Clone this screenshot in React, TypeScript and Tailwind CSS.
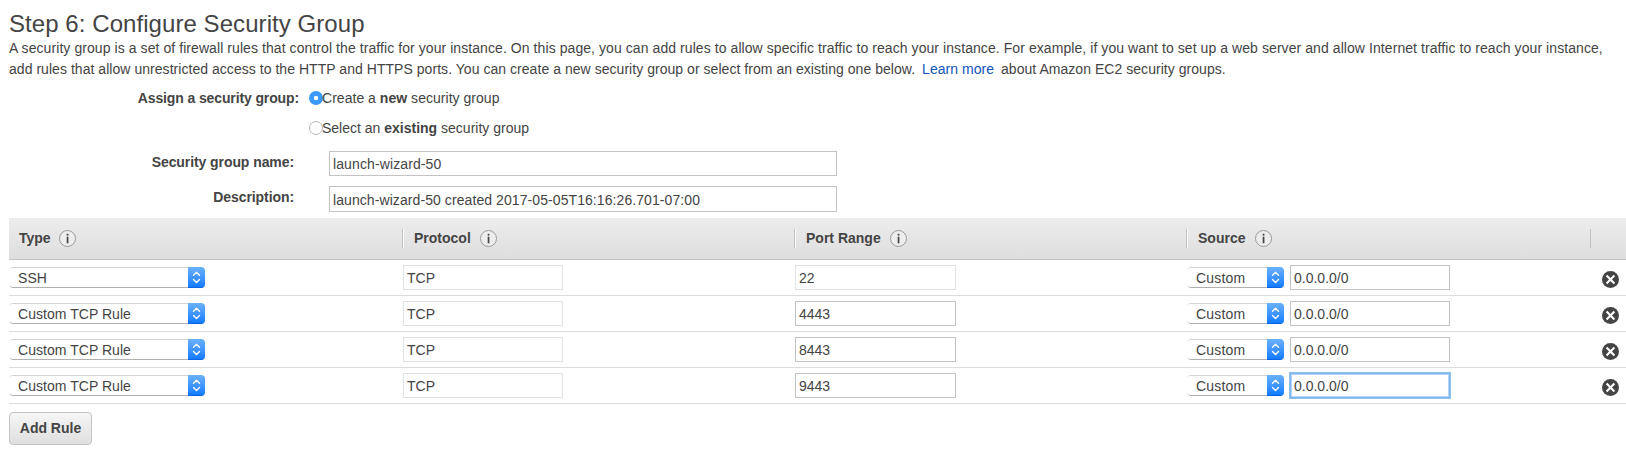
import React from "react";

type Rule = { type: string; port: string; portLocked?: boolean; focused?: boolean };

const rules: Rule[] = [
  { type: "SSH", port: "22", portLocked: true },
  { type: "Custom TCP Rule", port: "4443" },
  { type: "Custom TCP Rule", port: "8443" },
  { type: "Custom TCP Rule", port: "9443", focused: true },
];

const columns = "grid grid-cols-[393px_392px_392px_404px_1fr]";

function InfoIcon() {
  return (
    <svg width="17" height="17" viewBox="0 0 17 17" className="shrink-0">
      <circle cx="8.5" cy="8.5" r="8" fill="#ededed" stroke="#999" strokeWidth="1" />
      <rect x="7.7" y="3.8" width="1.7" height="1.8" fill="#444" />
      <rect x="7.7" y="6.7" width="1.7" height="6.6" fill="#444" />
    </svg>
  );
}

function HeaderCell({ label, first, gap }: { label?: string; first?: boolean; gap: string }) {
  return (
    <div className="flex h-[41px] items-center">
      {!first && (
        <div className={`h-[19px] w-[2px] border-l border-[#c0c0c0] ${label ? "bg-white" : ""}`} />
      )}
      {label && (
        <div className={`flex items-center pl-[10px] ${gap}`}>
          <span className="pb-[2px] font-bold leading-[16px]">{label}</span>
          <InfoIcon />
        </div>
      )}
    </div>
  );
}

function Field({ value, size, tone }: { value: string; size: string; tone: string }) {
  return (
    <div role="textbox" className={`flex items-center border bg-white pl-[3px] ${size} ${tone}`}>
      <span>{value}</span>
    </div>
  );
}

function Select({ value, width, tracking }: { value: string; width: string; tracking: string }) {
  return (
    <div
      role="combobox"
      className={`flex h-[21px] items-stretch overflow-hidden rounded-[4px] ${width}`}
    >
      <div className="flex flex-1 items-center rounded-l-[4px] border-t border-b border-t-[#d4d4d4] border-b-[#b0b0b0] pl-[9px]">
        <span className={tracking}>{value}</span>
      </div>
      <div className="w-[17px] border-b border-[#0a62e0] bg-linear-to-b from-[#69b1fa] to-[#0d7bff]">
        <svg width="17" height="20" viewBox="0 0 17 20" fill="none" stroke="#fff" strokeWidth="1.4" strokeLinecap="round" strokeLinejoin="round">
          <path d="M5.5 8.2 8.5 5.2l3 3M5.5 12.6l3 3 3-3" />
        </svg>
      </div>
    </div>
  );
}

function RemoveIcon() {
  return (
    <svg width="17" height="17" viewBox="0 0 17 17">
      <circle cx="8.5" cy="8.5" r="8.5" fill="#444" />
      <path d="m4.6 4.6 7.8 7.8m0-7.8-7.8 7.8" stroke="#fff" strokeWidth="2.1" />
    </svg>
  );
}

function Radio({ checked }: { checked?: boolean }) {
  return (
    <svg width="14" height="14" viewBox="0 0 14 14" className="-mr-px shrink-0">
      {checked ? (
        <>
          <circle cx="7" cy="7" r="7" fill="#3b99fc" />
          <circle cx="7" cy="7" r="2.2" fill="#fff" />
        </>
      ) : (
        <circle cx="7" cy="7" r="6.5" fill="#fff" stroke="#b4b4b4" />
      )}
    </svg>
  );
}

export default function App() {
  return (
    <main className="h-[455px] overflow-hidden bg-white pl-[9px] font-['Liberation_Sans',Arial,sans-serif] text-[14px] leading-[16px] whitespace-nowrap text-[#444]">
      <h1 className="pt-[9px] text-[24px] leading-[29px] tracking-[0.065px]">Step 6: Configure Security Group</h1>
      <div className="leading-[21px]">
        <p className="tracking-[0.073px]">
          A security group is a set of firewall rules that control the traffic for your instance. On this page, you can add rules to allow specific traffic to reach your instance. For example, if you want to set up a web server and allow Internet traffic to reach your instance,
        </p>
        <p className="tracking-[0.042px]">
          add rules that allow unrestricted access to the HTTP and HTTPS ports. You can create a new security group or select from an existing one below.{" "}
          <a className="mx-[3px] text-[#1155bb]">Learn more</a> about Amazon EC2 security groups.
        </p>
      </div>

      <div className="flex h-[71px] pt-[10px]">
        <div className="w-[290px] text-right font-bold tracking-[-0.12px]">Assign a security group:</div>
        <div className="flex flex-col gap-[14px] pl-[10px]">
          <div className="flex h-[16px] items-center">
            <Radio checked />
            <span className="tracking-[0.03px]">Create a <b>new</b> security group</span>
          </div>
          <div className="flex h-[16px] items-center">
            <Radio />
            <span>Select an <b>existing</b> security group</span>
          </div>
        </div>
      </div>
      <div className="flex h-[35px]">
        <div className="w-[285px] pt-[3px] text-right font-bold tracking-[-0.08px]">Security group name:</div>
        <div className="pl-[35px] tracking-[0.11px]">
          <Field value="launch-wizard-50" size="h-[25px] w-[508px]" tone="border-[#c3c3c3]" />
        </div>
      </div>
      <div className="flex h-[32px]">
        <div className="w-[285px] pt-[3px] text-right font-bold tracking-[-0.08px]">Description:</div>
        <div className="pl-[35px] tracking-[0.08px]">
          <Field value="launch-wizard-50 created 2017-05-05T16:16:26.701-07:00" size="h-[26px] w-[508px] pt-[2px]" tone="border-[#c3c3c3]" />
        </div>
      </div>

      <div className={`${columns} h-[42px] border-b border-[#c4c4c4] bg-linear-to-b from-[#ededed] to-[#dedede]`}>
        <HeaderCell label="Type" first gap="gap-[8px]" />
        <HeaderCell label="Protocol" gap="gap-[9px]" />
        <HeaderCell label="Port Range" gap="gap-[9px]" />
        <HeaderCell label="Source" gap="gap-[10px]" />
        <HeaderCell gap="gap-0" />
      </div>
      {rules.map((rule) => (
        <div key={rule.port} className={`${columns} h-[36px] items-center border-b border-[#dcdcdc]`}>
          <Select value={rule.type} width="w-[196px]" tracking="tracking-[0.04px]" />
          <div className="pl-[1px]">
            <Field value="TCP" size="h-[25px] w-[160px]" tone="border-[#e2e2e2]" />
          </div>
          <div className="pl-[1px]">
            <Field value={rule.port} size="h-[25px] w-[161px]" tone={rule.portLocked ? "border-[#e2e2e2]" : "border-[#c3c3c3]"} />
          </div>
          <div className="flex items-center gap-[6px] pl-[1px]">
            <Select value="Custom" width="w-[97px]" tracking="tracking-[0.2px]" />
            <Field
              value="0.0.0.0/0"
              size="h-[25px] w-[160px]"
              tone={rule.focused ? "border-[#7fb4ec] shadow-[0_0_0_1px_#8fc0f2,inset_0_0_0_1px_#b5d6f8]" : "border-[#c3c3c3]"}
            />
          </div>
          <div className="pt-[3px] pl-[12px]">
            <RemoveIcon />
          </div>
        </div>
      ))}
      <button className="mt-[8px] flex h-[33px] w-[83px] items-center justify-center rounded-[4px] border border-[#c4c4c4] bg-linear-to-b from-[#f6f6f6] to-[#dfdfdf] pb-[2px] font-bold">
        Add Rule
      </button>
    </main>
  );
}
